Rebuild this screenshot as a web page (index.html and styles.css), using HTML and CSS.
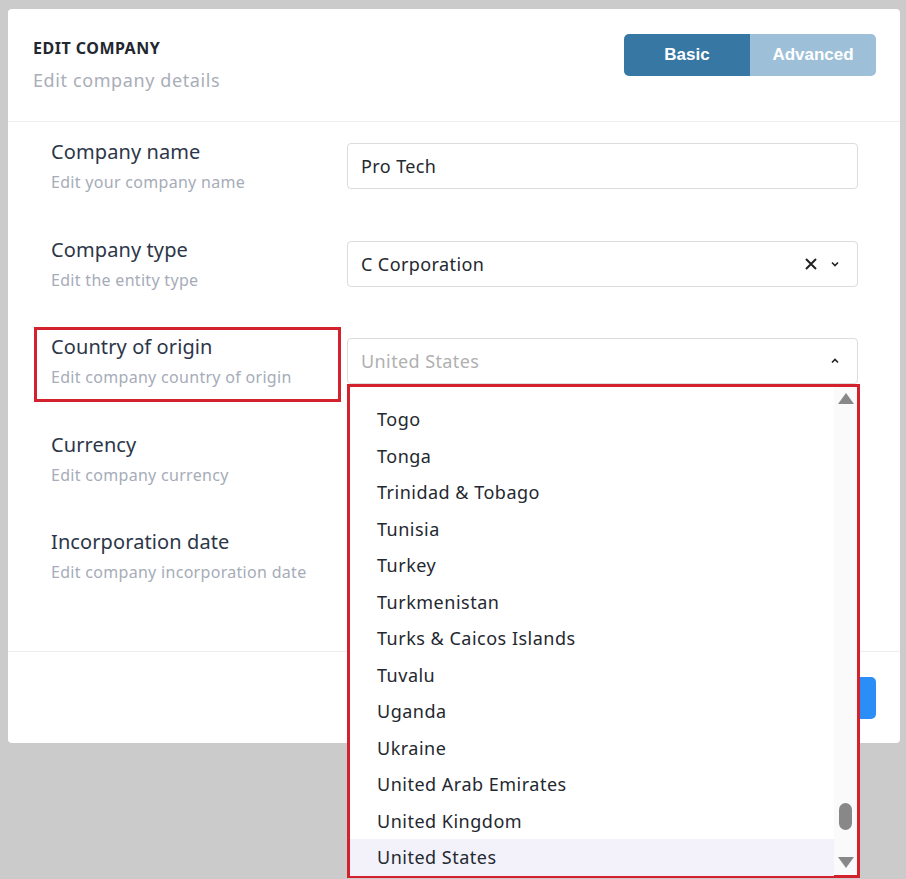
FILE: index.html
```html
<!DOCTYPE html>
<html lang="en">
<head>
    <meta charset="UTF-8">
    <title>Edit company</title>
    <link rel="stylesheet" href="styles.css">
</head>
<body>
    <div class="card">
        <div class="card-header">
            <div>
                <div class="title">EDIT COMPANY</div>
                <div class="subtitle">Edit company details</div>
            </div>
            <div class="toggle">
                <span class="toggle-btn active">Basic</span>
                <span class="toggle-btn">Advanced</span>
            </div>
        </div>

        <div class="form">
            <div class="row">
                <div class="label-box">
                    <div class="label">Company name</div>
                    <div class="hint">Edit your company name</div>
                </div>
                <div class="field">
                    <div class="input">Pro Tech</div>
                </div>
            </div>
            <div class="row">
                <div class="label-box">
                    <div class="label">Company type</div>
                    <div class="hint">Edit the entity type</div>
                </div>
                <div class="field">
                    <div class="input select">
                        <span>C Corporation</span>
                        <span class="icons">
                            <svg width="14" height="14" viewBox="0 0 14 14"><path d="M2 2 L12 12 M12 2 L2 12" stroke="#222" stroke-width="2" fill="none"/></svg>
                            <svg width="10" height="10" viewBox="0 0 10 10"><path d="M2 3.5 L5 6.5 L8 3.5" stroke="#222" stroke-width="1.6" fill="none"/></svg>
                        </span>
                    </div>
                </div>
            </div>
            <div class="row">
                <div class="label-box marked">
                    <div class="label">Country of origin</div>
                    <div class="hint">Edit company country of origin</div>
                </div>
                <div class="field">
                    <div class="input select open">
                        <span class="placeholder">United States</span>
                        <span class="icons">
                            <svg width="10" height="10" viewBox="0 0 10 10"><path d="M2 6.5 L5 3.5 L8 6.5" stroke="#222" stroke-width="1.6" fill="none"/></svg>
                        </span>
                    </div>
                    <div class="menu">
                        <ul class="options">
                            <li>Togo</li>
                            <li>Tonga</li>
                            <li>Trinidad &amp; Tobago</li>
                            <li>Tunisia</li>
                            <li>Turkey</li>
                            <li>Turkmenistan</li>
                            <li>Turks &amp; Caicos Islands</li>
                            <li>Tuvalu</li>
                            <li>Uganda</li>
                            <li>Ukraine</li>
                            <li>United Arab Emirates</li>
                            <li>United Kingdom</li>
                            <li class="hover">United States</li>
                        </ul>
                        <div class="scrollbar">
                            <span class="arrow up"></span>
                            <span class="thumb"></span>
                            <span class="arrow down"></span>
                        </div>
                    </div>
                </div>
            </div>
            <div class="row">
                <div class="label-box">
                    <div class="label">Currency</div>
                    <div class="hint">Edit company currency</div>
                </div>
                <div class="field"></div>
            </div>
            <div class="row">
                <div class="label-box">
                    <div class="label">Incorporation date</div>
                    <div class="hint">Edit company incorporation date</div>
                </div>
                <div class="field"></div>
            </div>
        </div>

        <div class="card-footer">
            <button class="save" type="button">Save</button>
        </div>
    </div>
</body>
</html>
```

FILE: styles.css
```css
body {
    margin: 0;
    background-color: #cbcbcb;
    font-family: "Noto Sans", sans-serif;
    height: 879px;
    overflow: hidden;
}
.card {
    margin: 9px 6px 0 8px;
    width: 892px;
    height: 734px;
    background-color: #fff;
    border-radius: 4px;
}
.card-header {
    display: flex;
    justify-content: space-between;
    align-items: flex-start;
    padding: 25px 24px 0 25px;
    height: 87px;
    border-bottom: 1px solid #eeeeee;
}
.title {
    margin-top: 4px;
    font-size: 16px;
    line-height: 20px;
    font-weight: 700;
    letter-spacing: 0.5px;
    color: #23272e;
}
.subtitle {
    margin-top: 10px;
    font-size: 18px;
    line-height: 24px;
    letter-spacing: 0.6px;
    color: #a9aeb8;
}
.toggle {
    display: flex;
    width: 252px;
    height: 42px;
    border-radius: 5px;
    overflow: hidden;
}
.toggle-btn {
    flex: 1;
    display: flex;
    align-items: center;
    justify-content: center;
    font-family: "Liberation Sans", sans-serif;
    font-size: 17px;
    font-weight: 700;
    color: #fff;
    background-color: #9dbfd8;
}
.toggle-btn.active {
    background-color: #3777a4;
}
.form {
    padding: 10px 42px 31px 26px;
}
.row {
    display: grid;
    grid-template-columns: 307px 511px;
    column-gap: 6px;
    height: 97.5px;
    align-items: start;
}
.label-box {
    padding: 4px 14px 11px;
    border: 3px solid transparent;
}
.label-box.marked {
    border-color: #d3222e;
}
.label {
    font-size: 20px;
    line-height: 25px;
    letter-spacing: 0.1px;
    color: #2c3648;
}
.hint {
    margin-top: 8px;
    font-size: 16px;
    line-height: 21px;
    letter-spacing: 0.3px;
    color: #a6acb8;
}
.field {
    position: relative;
    margin-top: 11px;
}
.input {
    height: 46px;
    box-sizing: border-box;
    border: 1px solid #dcdcdc;
    border-radius: 4px;
    padding: 0 17px 0 13px;
    display: flex;
    align-items: center;
    font-size: 18px;
    letter-spacing: 0.4px;
    color: #24282f;
}
.select {
    justify-content: space-between;
}
.icons {
    display: flex;
    align-items: center;
    gap: 12px;
}
.placeholder {
    color: #b0b0b0;
}
.menu {
    position: absolute;
    top: 46px;
    left: 0;
    width: 513px;
    height: 494px;
    box-sizing: border-box;
    border: 3px solid #d3222e;
    background-color: #fff;
    display: flex;
}
.options {
    list-style: none;
    margin: 0;
    padding: 14px 0 0;
    flex: 1;
}
.options li {
    height: 36.5px;
    line-height: 36.5px;
    padding-left: 27px;
    font-size: 18px;
    letter-spacing: 0.5px;
    color: #24282f;
}
.options li.hover {
    background-color: #f3f2fb;
}
.scrollbar {
    width: 23px;
    background-color: #fafafa;
    position: relative;
}
.arrow {
    position: absolute;
    left: 4px;
    width: 0;
    height: 0;
    border-left: 8px solid transparent;
    border-right: 8px solid transparent;
}
.arrow.up {
    top: 6px;
    border-bottom: 11px solid #888;
}
.arrow.down {
    bottom: 7px;
    border-top: 11px solid #888;
}
.thumb {
    position: absolute;
    left: 5px;
    top: 416px;
    width: 13px;
    height: 27px;
    border-radius: 7px;
    background-color: #888;
}
.card-footer {
    border-top: 1px solid #eeeeee;
    display: flex;
    justify-content: flex-end;
    padding: 25px 24px 0;
}
.save {
    width: 110px;
    height: 42px;
    border: none;
    border-radius: 5px;
    background-color: #2b8ef6;
    color: #fff;
    font-size: 16px;
}
```
